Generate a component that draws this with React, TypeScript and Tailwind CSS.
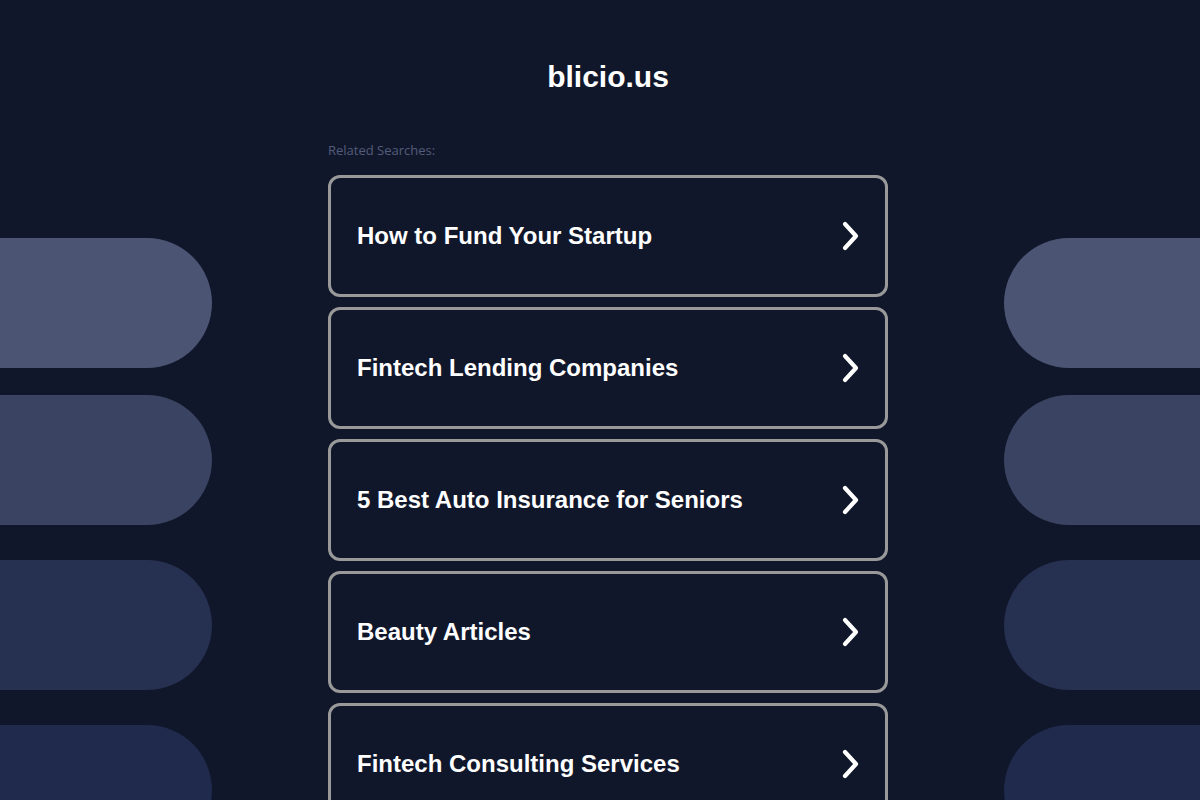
import React from "react";

const items = [
  "How to Fund Your Startup",
  "Fintech Lending Companies",
  "5 Best Auto Insurance for Seniors",
  "Beauty Articles",
  "Fintech Consulting Services",
];

const pillColors = ["bg-[#4b5573]", "bg-[#3a4361]", "bg-[#263050]", "bg-[#1f2a4c]"];
const pillMargins = ["mt-[238px]", "mt-[27px]", "mt-[35px]", "mt-[35px]"];

function Chevron() {
  return (
    <svg width="20" height="30" viewBox="0 0 20 30" fill="none">
      <path d="M4 3 L15 15 L4 27" stroke="white" strokeWidth="4.2" strokeLinecap="round" strokeLinejoin="round" />
    </svg>
  );
}

export default function App() {
  return (
    <div className="w-[1200px] h-[800px] overflow-hidden bg-[#11172b] flex justify-between" style={{ fontFamily: '"Liberation Sans", Arial, sans-serif' }}>
      <div className="w-[212px] flex flex-col shrink-0">
        {pillColors.map((c, i) => (
          <div key={i} className={`${pillMargins[i]} h-[130px] w-full rounded-r-[65px] shrink-0 ${c}`} />
        ))}
      </div>
      <div className="w-[560px] flex flex-col shrink-0">
        <h1 className="mt-[59px] text-center text-white font-bold text-[30px] leading-[36px]">blicio.us</h1>
        <div className="mt-[47px] text-[13px] leading-[16px] text-[#535c7a]" style={{ fontFamily: '"Open Sans", sans-serif' }}>
          Related Searches:
        </div>
        <div className="mt-[17px] flex flex-col gap-[10px]">
          {items.map((t) => (
            <div key={t} className="h-[122px] shrink-0 rounded-[12px] border-[3px] border-[#999999] flex items-center justify-between pl-[26px] pr-[24px]">
              <span className="text-white font-bold text-[24px]">{t}</span>
              <Chevron />
            </div>
          ))}
        </div>
      </div>
      <div className="w-[196px] flex flex-col shrink-0">
        {pillColors.map((c, i) => (
          <div key={i} className={`${pillMargins[i]} h-[130px] w-full rounded-l-[65px] shrink-0 ${c}`} />
        ))}
      </div>
    </div>
  );
}
